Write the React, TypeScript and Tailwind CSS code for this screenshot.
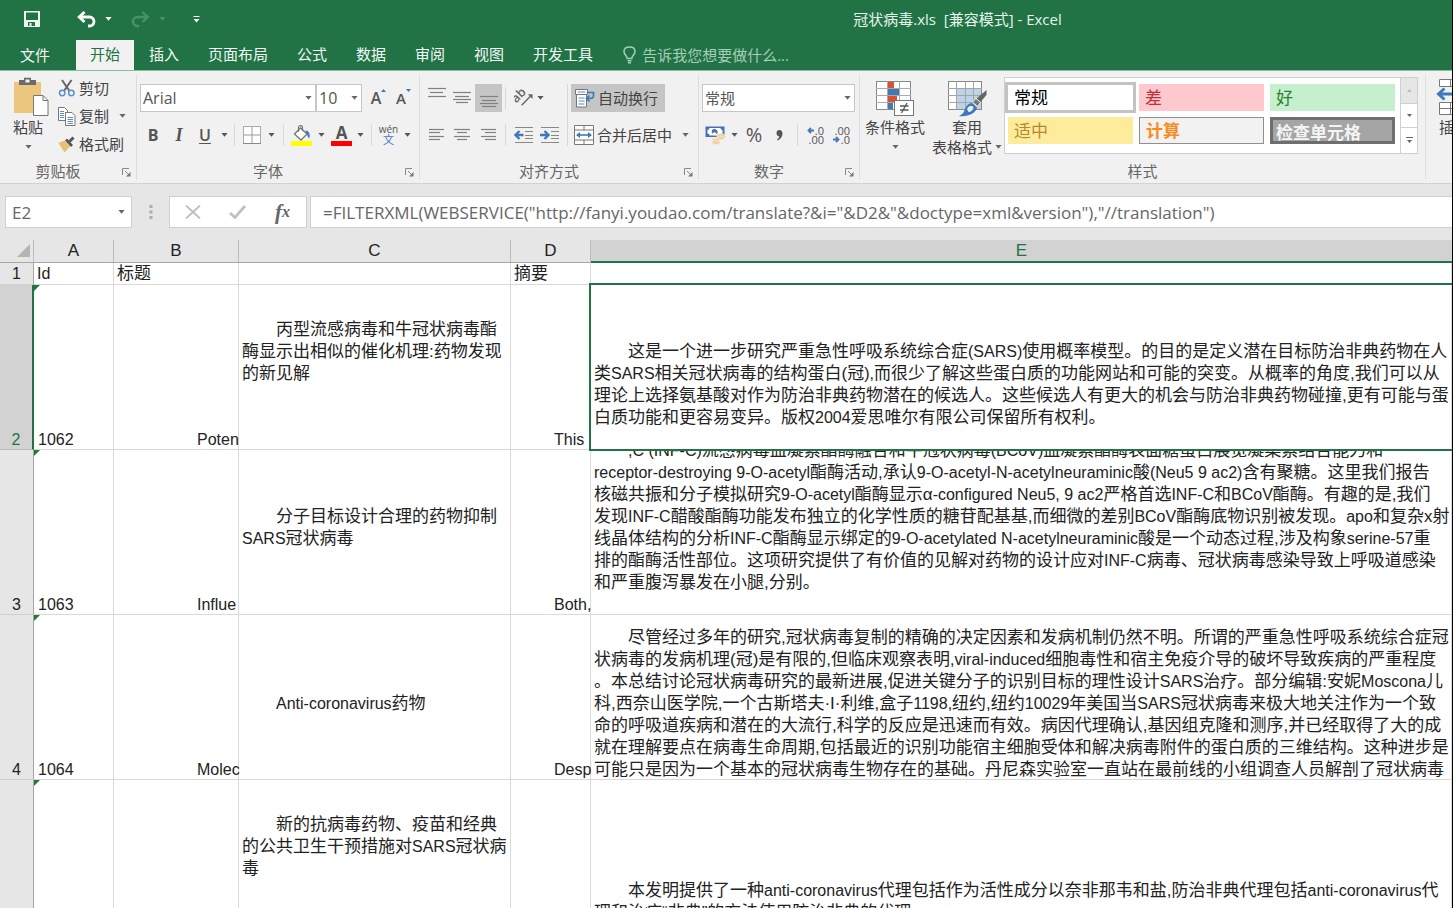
import React from "react";

const UI = "font-['Open_Sans','Noto_Sans_CJK_SC',sans-serif]";
const SHEET = "font-['Liberation_Sans','Noto_Sans_CJK_SC',sans-serif]";

/* ---------- small shared pieces ---------- */

function Caret({ className = "" }: { className?: string }) {
  return (
    <svg className={`shrink-0 ${className}`} width="7" height="4" viewBox="0 0 7 4" aria-hidden="true">
      <path d="M0.4 0h6.2L3.5 3.8z" fill="currentColor" />
    </svg>
  );
}

function Btn({ label, className = "", children }: { label: string; className?: string; children?: React.ReactNode }) {
  return (
    <button type="button" aria-label={label} className={`flex shrink-0 items-center justify-center ${className}`}>
      {children}
    </button>
  );
}

function Sep({ className = "h-[22px]" }: { className?: string }) {
  return <div className={`w-px shrink-0 bg-[#d8d8d8] ${className}`} />;
}

function Launcher({ label }: { label: string }) {
  return (
    <Btn label={label} className="h-4 w-5 pt-[3px]">
      <svg width="9" height="9" viewBox="0 0 9 9" fill="none" stroke="#888">
        <path d="M0.5 7V0.5H7M3 3l4 4" />
        <path d="M8.5 4v4.5H4z" fill="#777" stroke="none" />
      </svg>
    </Btn>
  );
}

function Group({ title, launcher, className = "", children }: { title: string; launcher?: boolean; className?: string; children: React.ReactNode }) {
  return (
    <section aria-label={title} className={`flex shrink-0 flex-col ${className}`}>
      <div className="flex h-[90px] items-start">{children}</div>
      <div className="flex h-5 items-center">
        <span className="flex-1 text-center text-[15px] leading-5 text-[#666]">{title}</span>
        {launcher && <Launcher label={`${title}设置`} />}
      </div>
    </section>
  );
}

function GroupSep() {
  return <div className="my-1 w-px shrink-0 bg-[#dcdcdc]" />;
}

function Dropdown({ label, value, className }: { label: string; value: string; className: string }) {
  return (
    <label className={`relative block h-7 shrink-0 ${className}`}>
      <span className="sr-only">{label}</span>
      <select className="h-7 w-full appearance-none border border-[#c6c6c6] bg-white px-[2px] text-[#555]">
        <option>{value}</option>
      </select>
      <Caret className="pointer-events-none absolute right-1 top-3 text-[#666]" />
    </label>
  );
}

/* ---------- icons ---------- */

function Lines({ rows, height = 20 }: { rows: [number, number, number][]; height?: number }) {
  return (
    <svg width="20" height={height} viewBox={`0 0 20 ${height}`}>
      {rows.map(([y, a, b]) => (
        <path key={y} d={`M${a} ${y + 0.5}H${b}`} stroke="#808080" strokeWidth="1.2" />
      ))}
    </svg>
  );
}

function PasteIcon() {
  return (
    <svg width="36" height="40" viewBox="0 0 36 40">
      <rect x="1" y="5" width="27" height="31" fill="#ecc67c" />
      <path d="M6 8V3h5V0.8h7V3h5v5z" fill="#6b6b6b" />
      <rect x="12.5" y="2.5" width="4" height="3" fill="#f1f1f1" />
      <path d="M20.5 18.5H30l5 5V38.500H20.5z" fill="#fff" stroke="#777" />
      <path d="M30 18.500V23.500H35" fill="none" stroke="#777" />
    </svg>
  );
}

function CutIcon() {
  return (
    <svg width="18" height="18" viewBox="0 0 18 18" fill="none">
      <path d="M4 1l7.500 11M13.500 1L6 12" stroke="#666" strokeWidth="2" />
      <circle cx="4.200" cy="14" r="2.700" stroke="#5a8fcb" strokeWidth="1.500" />
      <circle cx="13.300" cy="14" r="2.700" stroke="#5a8fcb" strokeWidth="1.500" />
    </svg>
  );
}

function CopyIcon() {
  return (
    <svg width="18" height="19" viewBox="0 0 18 19">
      <path d="M0.500 0.500h6l3 3v10h-9z" fill="#fff" stroke="#777" />
      <path d="M2 4.500h4M2 6.500h4M2 8.500h4M2 10.500h4" stroke="#5a8fcb" />
      <path d="M7.500 5.500h6.500l3 3v10h-9.500z" fill="#fff" stroke="#777" />
      <path d="M9.500 10.500h5.500M9.500 12.500h5.500M9.500 14.500h5.500M9.500 16.500h5.500" stroke="#5a8fcb" />
    </svg>
  );
}

function BrushIcon() {
  return (
    <svg width="18" height="17" viewBox="0 0 18 17">
      <path d="M0.500 7l6-2.500 5.500 6-5.500 6z" fill="#e8bf74" />
      <path d="M7 4.500l2-2 6 6.500-2 2z" fill="#555" />
      <path d="M11.500 5.500l4-4" stroke="#555" strokeWidth="3" />
    </svg>
  );
}

function BordersIcon() {
  return (
    <svg width="18" height="18" viewBox="0 0 18 18">
      <rect x="0.500" y="0.500" width="17" height="17" fill="#fff" stroke="#aaa" />
      <path d="M9 1v16M1 9h16" stroke="#999" />
      <path d="M0 17.500h18" stroke="#888" />
    </svg>
  );
}

function FillIcon() {
  return (
    <svg width="21" height="21" viewBox="0 0 21 21">
      <rect x="0" y="16" width="21" height="5" fill="#ffff00" />
      <path d="M3.500 9l6-6 6.500 6-6 6z" fill="#fff" stroke="#777" strokeWidth="1.300" />
      <path d="M7.500 7V2.500c0-2.500 4-2.500 4 0V6" fill="none" stroke="#777" strokeWidth="1.200" />
      <path d="M14 5.500c4 0 5.500 3.500 4.300 8-1.300-1-2-3-2.300-4.500z" fill="#4178b5" />
    </svg>
  );
}

function OrientationIcon() {
  return (
    <svg width="21" height="20" viewBox="0 0 21 20">
      <g transform="rotate(-45 8 10)">
        <text x="0" y="10" fontSize="13" fontFamily="Open Sans" fontWeight="600" fill="#666">ab</text>
      </g>
      <path d="M8 17.500L18 7.500" stroke="#666" strokeWidth="1.500" />
      <path d="M19.500 6v5l-5-5z" fill="#666" />
    </svg>
  );
}

function IndentIcon({ right }: { right?: boolean }) {
  return (
    <svg width="20" height="18" viewBox="0 0 20 18" fill="none">
      <path d="M1 1.500h18M11 5.500h8M11 9.500h8M11 12.500h8M1 16.500h18" stroke="#888" />
      {right ? (
        <path d="M0 9h8M4.500 5l4 4-4 4" stroke="#3f7ab8" strokeWidth="2.400" />
      ) : (
        <path d="M9.500 9h-7M5.500 5l-4 4 4 4" stroke="#3f7ab8" strokeWidth="2.400" />
      )}
    </svg>
  );
}

function WrapIcon() {
  return (
    <svg width="20" height="19" viewBox="0 0 20 19" fill="none">
      <path d="M0.500 0.500h12v5h-12zM1.500 5.500h10v12.500h-10z" fill="#fff" stroke="#777" />
      <path d="M2.500 3h8M3.500 9h6M3.500 12h6M3.500 15h6" stroke="#5a8fcb" />
      <path d="M12 3.500h6.500v3.500c0 2-1 2.500-6 2.500M14.500 6.500l-3 3 3 3" stroke="#3f7ab8" strokeWidth="1.700" />
    </svg>
  );
}

function MergeIcon() {
  return (
    <svg width="20" height="20" viewBox="0 0 20 20" fill="none">
      <path d="M0.500 0.500h19v19h-19zM0.500 5h19M0.500 15h19M10 0v5M10 15v5" fill="#fff" stroke="#777" />
      <path d="M3 10h14" stroke="#3f7ab8" strokeWidth="1.600" />
      <path d="M2 10l4-3v6zM18 10l-4-3v6z" fill="#3f7ab8" />
    </svg>
  );
}

function CurrencyIcon() {
  return (
    <svg width="20" height="19" viewBox="0 0 20 19">
      <rect x="0.500" y="0.500" width="19" height="10.500" fill="#4472b8" />
      <path d="M4.500 2h11c0 1 .8 1.800 2 2v3.500c-1.200.2-2 .8-2 2h-11c0-1.200-.8-1.800-2-2V4c1.200-.2 2-1 2-2z" fill="#fff" />
      <path d="M7 7.500C6 3 9 2.500 11 3.500s2 3 1 4.500c-1.500 0-1-2.500-3-1.500z" fill="#4472b8" />
      <ellipse cx="15.500" cy="9.500" rx="4" ry="2" fill="#f3cfa6" stroke="#fbeedd" strokeWidth="0.700" />
      <ellipse cx="15.500" cy="12" rx="4" ry="2" fill="#f3cfa6" stroke="#fbeedd" strokeWidth="0.700" />
      <ellipse cx="11" cy="14" rx="4" ry="2" fill="#f3cfa6" stroke="#fbeedd" strokeWidth="0.700" />
      <ellipse cx="11" cy="16.500" rx="4" ry="2" fill="#f3cfa6" stroke="#fbeedd" strokeWidth="0.700" />
    </svg>
  );
}

function DecimalButton({ less }: { less?: boolean }) {
  return (
    <Btn label={less ? "减少小数位数" : "增加小数位数"} className="h-7 w-[18px] flex-col items-stretch text-right text-[11px] leading-[9px]">
      <span className="flex items-center justify-end">
        {!less && <svg className="mr-px" width="7" height="7" viewBox="0 0 7 7"><path d="M7 3.500H2M4 1L1.500 3.500 4 6" fill="none" stroke="#3f7ab8" strokeWidth="1.800" /></svg>}
        {less ? ".00" : ".0"}
      </span>
      <span className="flex items-center justify-end">
        {less && <svg className="mr-px" width="7" height="7" viewBox="0 0 7 7"><path d="M0 3.500H5M3 1l2.500 2.500L3 6" fill="none" stroke="#3f7ab8" strokeWidth="1.800" /></svg>}
        {less ? ".0" : ".00"}
      </span>
    </Btn>
  );
}

function ConditionalIcon() {
  return (
    <svg width="38" height="36" viewBox="0 0 38 36">
      <rect x="0.500" y="0.500" width="34" height="28" fill="#fff" stroke="#888" />
      <path d="M0 7.500h35M0 14.500h35M0 21.500h35M11.500 0v29M23.500 0v29" stroke="#aaa" />
      <rect x="12" y="1" width="6" height="6" fill="#d9512f" />
      <rect x="12" y="8" width="11" height="6" fill="#3f7ab8" />
      <rect x="12" y="15" width="9" height="6" fill="#d9512f" />
      <rect x="12" y="22" width="5" height="6" fill="#3f7ab8" />
      <rect x="18.500" y="19.500" width="19" height="15" fill="#fff" stroke="#777" />
      <path d="M24 25h8.500M24 29h8.500M31 22l-5.500 10" stroke="#555" strokeWidth="1.300" />
    </svg>
  );
}

function TableFormatIcon() {
  return (
    <svg width="39" height="36" viewBox="0 0 39 36">
      <rect x="0.500" y="0.500" width="33" height="28" fill="#fff" stroke="#888" />
      <rect x="9" y="8" width="24" height="20" fill="#bdd3ea" />
      <path d="M0 7.500h34M0 14.500h34M0 21.500h34M8.500 0v29M17.500 0v29M25.500 0v29" stroke="#a5a5a5" />
      <path d="M38.500 9v5l-6 7-4-3.500z" fill="#666" />
      <path d="M28 17.500l4.500 4-3 4-5-4.500z" fill="#777" stroke="#f1f1f1" />
      <path d="M24 22l5 4.500c-1 6-9 9.500-18 8.500 4-2 5-4 6-7 1.500-4 4-6 7-6z" fill="#3f7ab8" />
      <path d="M19 28c1-3 5-4 6.500-1.500-.5 3-3 4.500-5 4.500z" fill="#e8f0f9" />
    </svg>
  );
}

function InsertIcon() {
  return (
    <svg width="38" height="38" viewBox="0 0 38 38">
      <path d="M3.500 0.500h33v7h-33zM14.500 0v8M25.500 0v8M3.500 23.500h33v12h-33zM3.500 29.500h33M14.500 23v13M25.500 23v13" fill="#fff" stroke="#777" />
      <path d="M2 15h34M8.500 9.500L2.500 15l6 5.500" fill="none" stroke="#3f7ab8" strokeWidth="3" />
    </svg>
  );
}

/* ---------- title bar and tabs ---------- */

function TitleBar() {
  return (
    <div className="flex h-10 items-center bg-[#217346] pb-[2px] text-white">
      <div className="flex w-[463px] shrink-0 items-center pl-6">
        <Btn label="保存" className="h-6 w-4">
          <svg width="16" height="16" viewBox="0 0 16 16">
            <path fillRule="evenodd" d="M0 0h16v16H0zM2 1.500V9h12V1.500zM4 11v4h1.500v-3h2v3H11v-4z" fill="#eef6f0" />
          </svg>
        </Btn>
        <Btn label="撤消" className="ml-9 h-6 w-5">
          <svg width="19" height="17" viewBox="0 0 19 17" fill="none" stroke="#fff" strokeWidth="2.800">
            <path d="M3 6h9.500a4.500 4.500 0 0 1 0 9H11" />
            <path d="M7.500 1L2.200 6l5.300 5" />
          </svg>
        </Btn>
        <Btn label="撤消选项" className="ml-[6px] h-6 w-3"><Caret /></Btn>
        <Btn label="恢复" className="ml-4 h-6 w-5 text-[#4c9069]">
          <svg width="19" height="17" viewBox="0 0 19 17" fill="none" stroke="currentColor" strokeWidth="2.400">
            <path d="M16 6H6.500a4.500 4.500 0 0 0 0 9H8" />
            <path d="M11.500 1l5.300 5-5.300 5" />
          </svg>
        </Btn>
        <Btn label="恢复选项" className="ml-[6px] h-6 w-3 text-[#4c9069]"><Caret /></Btn>
        <Btn label="自定义快速访问工具栏" className="ml-[22px] h-6 w-3">
          <svg width="7" height="7" viewBox="0 0 7 7"><path d="M0.500 0.500h6" stroke="#fff" /><path d="M0.500 3h6l-3 3.500z" fill="#fff" /></svg>
        </Btn>
      </div>
      <h1 className="flex-1 whitespace-pre text-center text-[15px] leading-5 text-[#e8f3ec]">{"冠状病毒.xls  [兼容模式] - Excel"}</h1>
    </div>
  );
}

const TABS = ["开始", "插入", "页面布局", "公式", "数据", "审阅", "视图", "开发工具"];

function TabBar() {
  return (
    <nav className="flex h-[30px] items-stretch gap-px bg-[#217346] text-[15px] leading-6 text-[#f2f8f4]">
      <button type="button" className="w-[75px] shrink-0 pl-5 text-left">文件</button>
      {TABS.map((t) => (
        <button
          key={t}
          type="button"
          className={t === "开始" ? "shrink-0 bg-[#f1f1f1] px-[14px] pb-[2px] text-[#217346]" : "shrink-0 px-[14px] pb-[2px]"}
        >
          {t}
        </button>
      ))}
      <label className="ml-[15px] flex items-center gap-[6px]">
        <svg width="13" height="18" viewBox="0 0 13 18" fill="none" stroke="#a6cdb5" strokeWidth="1.500">
          <path d="M4.200 12.500c0-3-3.200-3.500-3.200-7C1 2.500 3.500 1 6.500 1S12 2.500 12 5.500c0 3.500-3.200 4-3.200 7zM4.500 14.700h4M5 16.800h3" />
        </svg>
        <span className="sr-only">操作说明搜索</span>
        <input className="w-48 bg-transparent text-[15px] outline-none placeholder:text-[#a6cdb5]" placeholder="告诉我您想要做什么..." />
      </label>
    </nav>
  );
}

/* ---------- ribbon ---------- */

function ClipboardGroup() {
  return (
    <Group title="剪贴板" launcher className="w-[136px]">
      <button type="button" className="flex w-[56px] flex-col items-center pt-[6px] text-[15px] leading-5 text-[#444]">
        <span className="pl-[6px]"><PasteIcon /></span>
        <span>粘贴</span>
        <Caret className="mt-2 text-[#666]" />
      </button>
      <div className="flex flex-col pl-[2px] pt-[3px] text-[15px] text-[#444]">
        <button type="button" className="flex h-7 items-center gap-[3px]"><CutIcon />剪切</button>
        <button type="button" className="flex h-7 items-center gap-[3px]"><CopyIcon />复制<Caret className="ml-[7px] text-[#666]" /></button>
        <button type="button" className="flex h-7 items-center gap-[3px]"><BrushIcon />格式刷</button>
      </div>
    </Group>
  );
}

function FontGroup() {
  return (
    <Group title="字体" launcher className="w-[282px]">
      <div className="flex flex-col gap-[9px] pl-[3px] pt-[13px] text-[#555]">
        <div className="flex h-7 items-center">
          <Dropdown label="字体" value="Arial" className="w-[176px] text-[16px]" />
          <Dropdown label="字号" value="10" className="w-[46px] text-[16px]" />
          <Btn label="增大字号" className="ml-2 h-7 w-[17px] items-start text-[16px] font-semibold leading-7">
            A<svg className="mt-[5px]" width="5" height="3" viewBox="0 0 5 3"><path d="M0 3h5L2.500 0z" fill="#3f7ab8" /></svg>
          </Btn>
          <Btn label="减小字号" className="ml-2 h-7 w-[17px] items-start text-[15px] font-semibold leading-7">
            A<svg className="mt-[5px]" width="5" height="3" viewBox="0 0 5 3"><path d="M0 0h5L2.500 3z" fill="#3f7ab8" /></svg>
          </Btn>
        </div>
        <div className="flex h-7 items-center">
          <Btn label="加粗" className="h-7 w-[26px] text-[16px] font-bold">B</Btn>
          <Btn label="倾斜" className="h-7 w-[26px] font-['Liberation_Serif',serif] text-[18px] font-bold italic">I</Btn>
          <Btn label="下划线" className="h-7 w-[26px] text-[16px] font-semibold underline underline-offset-2">U</Btn>
          <Btn label="下划线选项" className="h-7 w-3"><Caret /></Btn>
          <Sep className="ml-1 h-[22px]" />
          <Btn label="边框" className="ml-2 h-7 w-[18px]"><BordersIcon /></Btn>
          <Btn label="边框选项" className="ml-1 h-7 w-3"><Caret /></Btn>
          <Sep className="ml-[6px] h-[22px]" />
          <Btn label="填充颜色" className="ml-[7px] h-7 w-[21px]"><FillIcon /></Btn>
          <Btn label="填充颜色选项" className="ml-[3px] h-7 w-3"><Caret /></Btn>
          <Btn label="字体颜色" className="ml-1 h-7 w-[21px] flex-col text-[17px] font-bold leading-4">
            <span>A</span>
            <span className="h-[5px] w-[21px] bg-[#ff0000]" />
          </Btn>
          <Btn label="字体颜色选项" className="ml-[2px] h-7 w-3"><Caret /></Btn>
          <Sep className="ml-[5px] h-[22px]" />
          <Btn label="拼音指南" className="ml-2 h-7 w-[17px] flex-col">
            <span className="text-[10px] leading-[9px]">wén</span>
            <span className="text-[11px] leading-[11px] text-[#3f7ab8]">文</span>
          </Btn>
          <Btn label="拼音选项" className="ml-1 h-7 w-3"><Caret /></Btn>
        </div>
      </div>
    </Group>
  );
}

function AlignmentGroup() {
  return (
    <Group title="对齐方式" launcher className="w-[278px]">
      <div className="flex pt-[13px] text-[#555]">
        <div className="flex w-[147px] flex-col gap-[9px] pl-[3px]">
          <div className="flex h-7 items-center">
            <Btn label="顶端对齐" className="h-7 w-[26px]"><Lines rows={[[2, 2, 20], [6, 4, 17], [10, 2, 20]]} height={24} /></Btn>
            <Btn label="垂直居中" className="h-7 w-[26px]"><Lines rows={[[4, 1, 19], [8, 3, 17], [11, 1, 19], [14, 4, 16]]} /></Btn>
            <Btn label="底端对齐" className="h-7 w-[27px] bg-[#c5c5c5]"><Lines rows={[[8, 1, 19], [12, 3, 17], [15, 1, 19], [18, 3, 17]]} /></Btn>
            <Sep className="ml-[3px] h-[22px]" />
            <Btn label="方向" className="ml-2 h-7 w-5"><OrientationIcon /></Btn>
            <Btn label="方向选项" className="h-7 w-3"><Caret /></Btn>
          </div>
          <div className="flex h-7 items-center">
            <Btn label="左对齐" className="h-7 w-[26px]"><Lines rows={[[4, 3, 18], [7, 3, 14], [11, 3, 18], [14, 3, 14]]} /></Btn>
            <Btn label="居中" className="h-7 w-[26px]"><Lines rows={[[4, 2, 18], [7, 5, 15], [11, 2, 18], [14, 5, 15]]} /></Btn>
            <Btn label="右对齐" className="h-7 w-[27px]"><Lines rows={[[4, 2, 17], [7, 6, 17], [11, 2, 17], [14, 6, 17]]} /></Btn>
            <Sep className="ml-[3px] h-[22px]" />
            <Btn label="减少缩进量" className="ml-2 h-7 w-5"><IndentIcon /></Btn>
            <Btn label="增加缩进量" className="ml-[6px] h-7 w-5"><IndentIcon right /></Btn>
          </div>
        </div>
        <Sep className="h-[62px]" />
        <div className="flex flex-col gap-[9px] pl-[3px] text-[15px] text-[#444]">
          <button type="button" className="flex h-7 w-[94px] items-center gap-[3px] bg-[#c5c5c5] pl-1"><WrapIcon /><span className="whitespace-nowrap">自动换行</span></button>
          <button type="button" className="flex h-7 items-center gap-[3px] pl-[3px]"><MergeIcon /><span className="whitespace-nowrap">合并后居中</span><Caret className="ml-[7px] text-[#666]" /></button>
        </div>
      </div>
    </Group>
  );
}

function NumberGroup() {
  return (
    <Group title="数字" launcher className="w-[160px]">
      <div className="flex flex-col gap-[9px] pl-[3px] pt-[13px] text-[#555]">
        <Dropdown label="数字格式" value="常规" className="w-[153px] text-[15px]" />
        <div className="flex h-7 items-center">
          <Btn label="会计数字格式" className="ml-[3px] h-7 w-5"><CurrencyIcon /></Btn>
          <Btn label="会计数字格式选项" className="ml-[3px] h-7 w-3"><Caret /></Btn>
          <Btn label="百分比样式" className="ml-[2px] h-7 w-6 text-[20px]">%</Btn>
          <Btn label="千位分隔样式" className="h-7 w-[26px]">
            <svg width="7" height="11" viewBox="0 0 7 11"><path d="M3.200 0C5.500 0 6.500 1.600 6.500 3.500c0 3.500-2.500 6-5 7l-.5-1c1.500-1 2.300-2 2.300-3.200C1.500 6.500 0.500 5 0.500 3c0-1.800 1-3 2.700-3z" fill="#555" /></svg>
          </Btn>
          <Sep className="ml-[5px] h-[22px]" />
          <span className="ml-2 flex gap-2"><DecimalButton /><DecimalButton less /></span>
        </div>
      </div>
    </Group>
  );
}

function StylesGroup() {
  const base = "h-[27px] w-[125px] px-[6px] text-left text-[17px] leading-[25px]";
  return (
    <Group title="样式" className="w-[565px]">
      <button type="button" className="flex w-[70px] flex-col items-center pt-[10px] text-[15px] leading-5 text-[#444]">
        <ConditionalIcon />
        <span>条件格式</span>
        <Caret className="mt-2 text-[#666]" />
      </button>
      <button type="button" className="flex w-[74px] flex-col items-center pt-[10px] text-[15px] leading-5 text-[#444]">
        <TableFormatIcon />
        <span>套用</span>
        <span className="flex items-center gap-[3px] whitespace-nowrap">表格格式<Caret className="text-[#666]" /></span>
      </button>
      <div className="mt-[6px] flex h-[77px] w-[414px] border border-[#cfcfcf] bg-white">
        <div className="grid flex-1 grid-cols-[131px_131px_125px] content-start gap-y-[6px] pl-[3px] pt-[6px]">
          <button type="button" className="-mx-[3px] -my-[2px] h-[31px] w-[131px] border-[3px] border-[#c3c3c3] bg-white px-[6px] text-left text-[17px] leading-[25px] text-black">常规</button>
          <button type="button" className={`${base} bg-[#ffc7ce] text-[#c0303c]`}>差</button>
          <button type="button" className={`${base} bg-[#c6efce] text-[#2c8031]`}>好</button>
          <button type="button" className={`${base} bg-[#ffeb9c] text-[#b88a2e]`}>适中</button>
          <button type="button" className={`${base} border border-[#8f8f8f] bg-[#f2f2f2] font-bold text-[#fa8a1e]`}>计算</button>
          <button type="button" className={`${base} border-[3px] border-[#6e6e6e] bg-[#a5a5a5] pl-[3px] font-bold leading-[21px] text-[#f4f4f4]`}>检查单元格</button>
        </div>
        <div className="flex w-[17px] shrink-0 flex-col divide-y divide-[#cfcfcf] border-l border-[#cfcfcf] text-[#666]">
          <Btn label="上一行" className="h-[26px] bg-[#e6e6e6] text-[#bbb]"><svg width="5" height="3" viewBox="0 0 5 3"><path d="M0 3h5L2.500 0z" fill="currentColor" /></svg></Btn>
          <Btn label="下一行" className="h-6"><svg width="5" height="3" viewBox="0 0 5 3"><path d="M0 0h5L2.500 3z" fill="currentColor" /></svg></Btn>
          <Btn label="其他样式" className="h-[25px]"><svg width="7" height="7" viewBox="0 0 7 7"><path d="M0 0.500h7" stroke="currentColor" /><path d="M1 3h5L3.500 6z" fill="currentColor" /></svg></Btn>
        </div>
      </div>
    </Group>
  );
}

function Ribbon() {
  return (
    <div className="flex h-[114px] items-stretch overflow-hidden border-b border-t border-b-[#d2d2d2] border-t-[#8dbb9f] bg-[#f1f1f1]">
      <ClipboardGroup />
      <GroupSep />
      <FontGroup />
      <GroupSep />
      <AlignmentGroup />
      <GroupSep />
      <NumberGroup />
      <GroupSep />
      <StylesGroup />
      <GroupSep />
      <button type="button" className="flex flex-col items-start pl-[10px] pt-2 text-[15px] leading-5 text-[#444]">
        <InsertIcon />
        <span className="pl-[3px]">插入</span>
      </button>
    </div>
  );
}

/* ---------- formula bar ---------- */

function FormulaBar() {
  return (
    <div className="flex h-[56px] items-start bg-[#e6e6e6] pt-3 text-[#666]">
      <label className="relative ml-[5px] block h-8 w-[127px] shrink-0">
        <span className="sr-only">名称框</span>
        <input defaultValue="E2" className="h-8 w-full border border-[#d0d0d0] bg-white px-[6px] text-[17px] outline-none" />
        <Caret className="pointer-events-none absolute right-[7px] top-[14px]" />
      </label>
      <svg className="ml-[17px] mt-[9px] shrink-0" width="4" height="14" viewBox="0 0 4 14" fill="#aaa"><path d="M0.500 0h3v3h-3zM0.500 5.500h3v3h-3zM0.500 11h3v3h-3z" /></svg>
      <div className="ml-4 flex h-8 w-[138px] shrink-0 items-center border border-[#d0d0d0] bg-white">
        <Btn label="取消" className="h-7 w-[45px]"><svg width="16" height="14" viewBox="0 0 16 14"><path d="M1 0.500l14 13M15 0.500L1 13.500" stroke="#bdbdbd" strokeWidth="1.800" /></svg></Btn>
        <Btn label="输入" className="h-7 w-[45px]"><svg width="17" height="14" viewBox="0 0 17 14" fill="none"><path d="M1 8l5 4.500L16 1" stroke="#c0c0c0" strokeWidth="2.800" /></svg></Btn>
        <Btn label="插入函数" className="h-7 w-[45px] items-baseline font-['Liberation_Serif',serif] font-bold italic">
          <span className="text-[21px] leading-7">f</span><span className="text-[16px] leading-7">x</span>
        </Btn>
      </div>
      <label className="ml-[3px] block min-w-0 flex-1">
        <span className="sr-only">编辑栏</span>
        <input
          defaultValue={'=FILTERXML(WEBSERVICE("http://fanyi.youdao.com/translate?&i="&D2&"&doctype=xml&version"),"//translation")'}
          className="h-8 w-full border border-r-0 border-[#d0d0d0] bg-white px-3 text-[17px] outline-none"
        />
      </label>
    </div>
  );
}

/* ---------- worksheet ---------- */

type Row = { n: number; id?: string; b?: string; c: string[]; cPad: string; d?: string; e: string[]; eBox: string };

const ROWS: Row[] = [
  {
    n: 2, id: "1062", b: "Poten", d: "This",
    c: ["丙型流感病毒和牛冠状病毒酯", "酶显示出相似的催化机理:药物发现", "的新见解"], cPad: "pt-[34px]",
    eBox: "justify-end pb-5",
    e: [
      "这是一个进一步研究严重急性呼吸系统综合症(SARS)使用概率模型。的目的是定义潜在目标防治非典药物在人",
      "类SARS相关冠状病毒的结构蛋白(冠),而很少了解这些蛋白质的功能网站和可能的突变。从概率的角度,我们可以从",
      "理论上选择氨基酸对作为防治非典药物潜在的候选人。这些候选人有更大的机会与防治非典药物碰撞,更有可能与蛋",
      "白质功能和更容易变异。版权2004爱思唯尔有限公司保留所有权利。",
    ],
  },
  {
    n: 3, id: "1063", b: "Influe", d: "Both,",
    c: ["分子目标设计合理的药物抑制", "SARS冠状病毒"], cPad: "pt-[56px]",
    eBox: "justify-end pb-5",
    e: [
      ",C (INF-C)流感病毒血凝素酯酶融合和牛冠状病毒(BCoV)血凝素酯酶表面糖蛋白展览凝集素结合能力和",
      "receptor-destroying 9-O-acetyl酯酶活动,承认9-O-acetyl-N-acetylneuraminic酸(Neu5 9 ac2)含有聚糖。这里我们报告",
      "核磁共振和分子模拟研究9-O-acetyl酯酶显示α-configured Neu5, 9 ac2严格首选INF-C和BCoV酯酶。有趣的是,我们",
      "发现INF-C醋酸酯酶功能发布独立的化学性质的糖苷配基基,而细微的差别BCoV酯酶底物识别被发现。apo和复杂x射",
      "线晶体结构的分析INF-C酯酶显示绑定的9-O-acetylated N-acetylneuraminic酸是一个动态过程,涉及构象serine-57重",
      "排的酯酶活性部位。这项研究提供了有价值的见解对药物的设计应对INF-C病毒、冠状病毒感染导致上呼吸道感染",
      "和严重腹泻暴发在小腿,分别。",
    ],
  },
  {
    n: 4, id: "1064", b: "Molec", d: "Desp",
    c: ["Anti-coronavirus药物"], cPad: "pt-[78px]",
    eBox: "justify-start pt-3",
    e: [
      "尽管经过多年的研究,冠状病毒复制的精确的决定因素和发病机制仍然不明。所谓的严重急性呼吸系统综合症冠",
      "状病毒的发病机理(冠)是有限的,但临床观察表明,viral-induced细胞毒性和宿主免疫介导的破坏导致疾病的严重程度",
      "。本总结讨论冠状病毒研究的最新进展,促进关键分子的识别目标的理性设计SARS治疗。部分编辑:安妮Moscona儿",
      "科,西奈山医学院,一个古斯塔夫·I·利维,盒子1198,纽约,纽约10029年美国当SARS冠状病毒来极大地关注作为一个致",
      "命的呼吸道疾病和潜在的大流行,科学的反应是迅速而有效。病因代理确认,基因组克隆和测序,并已经取得了大的成",
      "就在理解要点在病毒生命周期,包括最近的识别功能宿主细胞受体和解决病毒附件的蛋白质的三维结构。这种进步是",
      "可能只是因为一个基本的冠状病毒生物存在的基础。丹尼森实验室一直站在最前线的小组调查人员解剖了冠状病毒",
    ],
  },
  {
    n: 5,
    c: ["新的抗病毒药物、疫苗和经典", "的公共卫生干预措施对SARS冠状病", "毒"], cPad: "pt-[34px]",
    eBox: "justify-start pt-[100px]",
    e: [
      "本发明提供了一种anti-coronavirus代理包括作为活性成分以奈非那韦和盐,防治非典代理包括anti-coronavirus代",
      "理和治疗“非典”的方法使用防治非典的代理。",
    ],
  },
];

/* Latin runs are set one pixel smaller than the Chinese text around them. */
function MixedText({ text }: { text: string }) {
  return (
    <>
      {text.split(/([\x20-\x7e]{2,})/).map((part, i) =>
        i % 2 === 1 ? <span key={i} className="text-[16px]">{part}</span> : part
      )}
    </>
  );
}

function Paragraph({ lines }: { lines: string[] }) {
  return (
    <>
      {lines.map((l, i) => (
        <p key={l} className={i === 0 ? "h-[22px] shrink-0 whitespace-nowrap pl-[34px]" : "h-[22px] shrink-0 whitespace-nowrap"}>
          <MixedText text={l} />
        </p>
      ))}
    </>
  );
}

const CELL = "border-b border-r border-[#d9d9d9] p-0";
const COLHEAD = "h-[22px] border-b border-r border-b-[#a6a6a6] border-r-[#bdbdbd] p-0 font-normal";

function Sheet() {
  return (
    <table className={`w-full table-fixed border-separate border-spacing-0 bg-white text-[17px] leading-[22px] text-[#222] ${SHEET}`}>
      <colgroup>
        <col className="w-[34px]" />
        <col className="w-[80px]" />
        <col className="w-[125px]" />
        <col className="w-[272px]" />
        <col className="w-[80px]" />
        <col />
      </colgroup>
      <thead className="bg-[#e6e6e6]">
        <tr>
          <th className={COLHEAD} aria-label="全选">
            <svg className="ml-4" width="15" height="14" viewBox="0 0 15 14"><path d="M14 0v13H1z" fill="#b4b4b4" /></svg>
          </th>
          {["A", "B", "C", "D"].map((c) => (
            <th key={c} scope="col" className={COLHEAD}>{c}</th>
          ))}
          <th scope="col" className="h-[22px] border-b-2 border-[#217346] bg-[#d2d2d2] p-0 font-normal leading-5 text-[#217346]">E</th>
        </tr>
      </thead>
      <tbody>
        <tr>
          <th scope="row" className="h-[22px] border-b border-r border-b-[#cfcfcf] border-r-[#a6a6a6] bg-[#e6e6e6] p-0 text-[16px] font-normal leading-[21px]">1</th>
          <td className={`${CELL} pl-[3px] text-[16px] leading-[21px]`}>Id</td>
          <td className={`${CELL} pl-[3px] leading-[21px]`}>标题</td>
          <td className={CELL} />
          <td className={`${CELL} pl-[3px] leading-[21px]`}>摘要</td>
          <td className={CELL} />
        </tr>
        {ROWS.map((r) => (
          <tr key={r.n}>
            <th
              scope="row"
              className={
                r.n === 2
                  ? "h-[165px] border-b border-r-2 border-b-[#bdbdbd] border-r-[#217346] bg-[#d2d2d2] p-0 align-bottom text-[16px] font-normal leading-[18px] text-[#217346]"
                  : "h-[165px] border-b border-r border-b-[#cfcfcf] border-r-[#a6a6a6] bg-[#e6e6e6] p-0 align-bottom text-[16px] font-normal leading-[18px]"
              }
            >
              {r.n === 5 ? null : r.n}
            </th>
            <td className={`${CELL} relative pl-1 align-bottom text-[16px] leading-[18px]`}>
              <svg className="absolute left-0 top-0" width="6" height="6" viewBox="0 0 6 6" aria-hidden="true"><path d="M0 0h6L0 6z" fill="#1e7b34" /></svg>
              {r.id}
            </td>
            <td className={`${CELL} whitespace-nowrap pl-[83px] align-bottom text-[16px] leading-[18px]`}>{r.b}</td>
            <td className={CELL}>
              <div className={`flex h-[164px] flex-col overflow-hidden pl-[3px] ${r.cPad}`}><Paragraph lines={r.c} /></div>
            </td>
            <td className={`${CELL} whitespace-nowrap pl-[43px] align-bottom text-[16px] leading-[18px]`}>{r.d}</td>
            <td className={`${CELL} relative`}>
              <div className={`flex h-[164px] flex-col overflow-hidden pl-[3px] ${r.eBox}`}><Paragraph lines={r.e} /></div>
              {r.n === 2 && <div className="pointer-events-none absolute -bottom-[2px] -left-[2px] -right-[3px] -top-[2px] z-10 border-2 border-[#217346]" />}
            </td>
          </tr>
        ))}
      </tbody>
    </table>
  );
}

export default function App() {
  return (
    <div className={`h-screen overflow-hidden border-r border-black bg-white ${UI}`}>
      <TitleBar />
      <TabBar />
      <Ribbon />
      <FormulaBar />
      <Sheet />
    </div>
  );
}
